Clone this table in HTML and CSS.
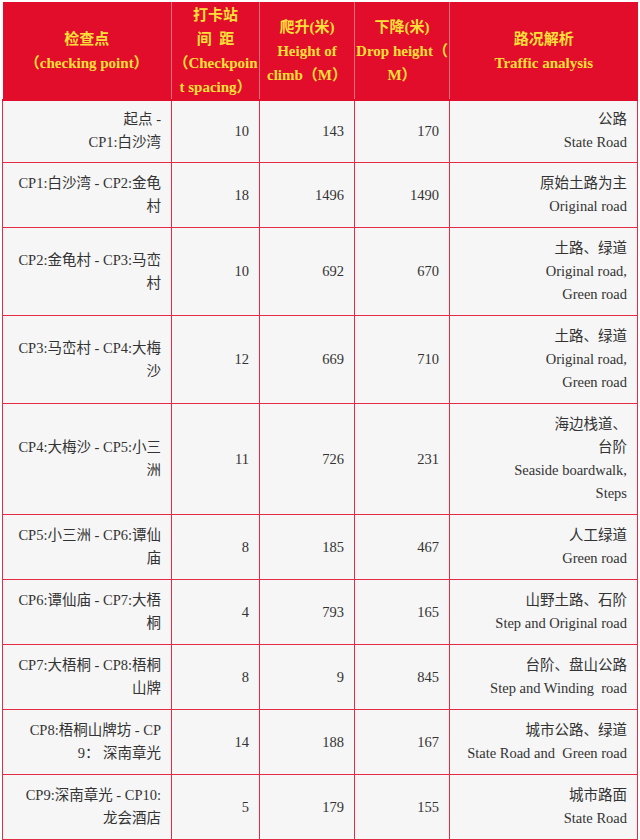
FILE: index.html
```html
<!DOCTYPE html>
<html lang="zh">
<head>
<meta charset="utf-8">
<title>路况解析</title>
<link rel="stylesheet" href="styles.css">
</head>
<body>
<table class="route">
  <colgroup>
    <col class="c1"><col class="c2"><col class="c3"><col class="c4"><col class="c5">
  </colgroup>
  <thead>
    <tr>
      <th>检查点<br>（checking point）</th>
      <th>打卡站<br>间&nbsp;&nbsp;距<br>（Checkpoin<br>t spacing）</th>
      <th>爬升(米)<br>Height of<br>climb（M）</th>
      <th>下降(米)<br>Drop height（<br>M）</th>
      <th>路况解析<br>Traffic analysis</th>
    </tr>
  </thead>
  <tbody>
    <tr class="first"><td>起点 -<br>CP1:白沙湾</td><td>10</td><td>143</td><td>170</td><td>公路<br>State Road</td></tr>
    <tr><td>CP1:白沙湾 - CP2:金龟<br>村</td><td>18</td><td>1496</td><td>1490</td><td>原始土路为主<br>Original road</td></tr>
    <tr><td>CP2:金龟村 - CP3:马峦<br>村</td><td>10</td><td>692</td><td>670</td><td>土路、绿道<br>Original road,<br>Green road</td></tr>
    <tr><td>CP3:马峦村 - CP4:大梅<br>沙</td><td>12</td><td>669</td><td>710</td><td>土路、绿道<br>Original road,<br>Green road</td></tr>
    <tr><td>CP4:大梅沙 - CP5:小三<br>洲</td><td>11</td><td>726</td><td>231</td><td>海边栈道、<br>台阶<br>Seaside boardwalk,<br>Steps</td></tr>
    <tr><td>CP5:小三洲 - CP6:谭仙<br>庙</td><td>8</td><td>185</td><td>467</td><td>人工绿道<br>Green road</td></tr>
    <tr><td>CP6:谭仙庙 - CP7:大梧<br>桐</td><td>4</td><td>793</td><td>165</td><td>山野土路、石阶<br>Step and Original road</td></tr>
    <tr><td>CP7:大梧桐 - CP8:梧桐<br>山牌</td><td>8</td><td>9</td><td>845</td><td>台阶、盘山公路<br>Step and Winding&nbsp; road</td></tr>
    <tr><td>CP8:梧桐山牌坊 - CP<br>9： 深南章光</td><td>14</td><td>188</td><td>167</td><td>城市公路、绿道<br>State Road and&nbsp; Green road</td></tr>
    <tr><td>CP9:深南章光 - CP10:<br>龙会酒店</td><td>5</td><td>179</td><td>155</td><td>城市路面<br>State Road</td></tr>
    <tr class="tail"><td></td><td></td><td></td><td></td><td></td></tr>
  </tbody>
</table>
</body>
</html>
```

FILE: styles.css
```css
html, body {
  margin: 0;
  padding: 0;
  background: #ffffff;
}

.route {
  margin: 2px 0 0 2px;
  width: 635px;
  border-collapse: collapse;
  table-layout: fixed;
  font-family: "Liberation Serif", "Noto Sans CJK SC", serif;
  font-size: 14.5px;
}

.c1 { width: 169px; }
.c2 { width: 88px; }
.c3 { width: 95px; }
.c4 { width: 95px; }
.c5 { width: 188px; }

.route th {
  background: #e20c2b;
  color: #ffe03a;
  font-weight: bold;
  font-size: 15px;
  text-align: center;
  vertical-align: middle;
  line-height: 24px;
  height: 97px;
  padding: 0 1px;
  border: 1px solid #ef6b7e;
  border-top: none;
  white-space: nowrap;
}

.route th:first-child { border-left: none; }
.route th:last-child { border-right: none; }

.route td {
  background: #f6f6f6;
  color: #333333;
  text-align: right;
  vertical-align: middle;
  line-height: 23px;
  padding: 9px 10px 9px 6px;
  border: 1px solid #e52c46;
  white-space: nowrap;
}

.route .first td {
  border-top: 2px solid #e20c2b;
  padding-top: 7px;
  padding-bottom: 8px;
}

.route .tail td {
  height: 46px;
}
```
